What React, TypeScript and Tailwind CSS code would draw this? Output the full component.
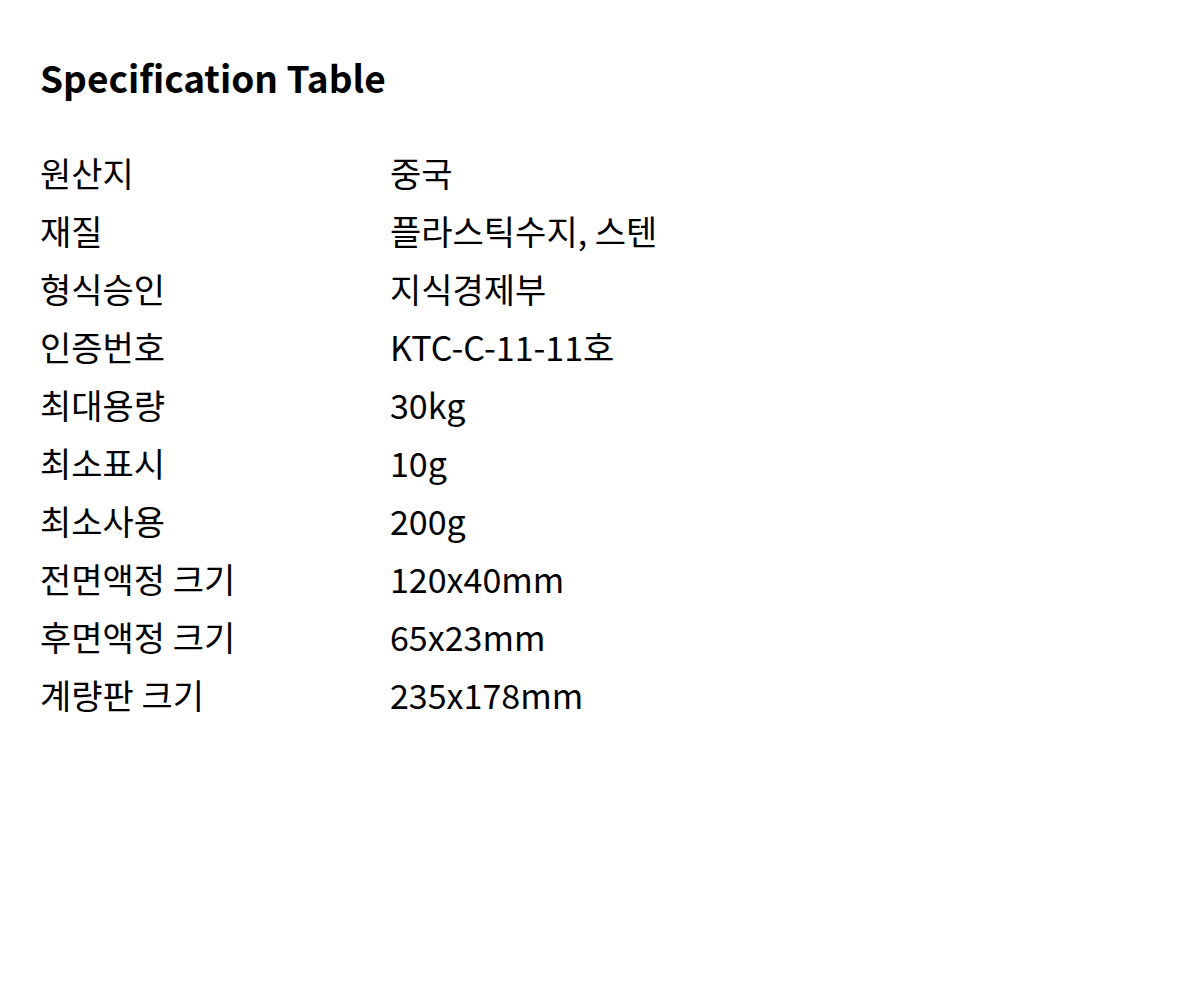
const specs: [string, string][] = [
  ["원산지", "중국"],
  ["재질", "플라스틱수지, 스텐"],
  ["형식승인", "지식경제부"],
  ["인증번호", "KTC-C-11-11호"],
  ["최대용량", "30kg"],
  ["최소표시", "10g"],
  ["최소사용", "200g"],
  ["전면액정 크기", "120x40mm"],
  ["후면액정 크기", "65x23mm"],
  ["계량판 크기", "235x178mm"],
];

const App = () => {
  return (
    <div className="min-h-screen bg-white px-10 pt-[50px] text-black [font-family:'Noto_Sans_CJK_KR','Noto_Sans',sans-serif]">
      <h1 className="text-[37px] font-bold leading-[54px]">Specification Table</h1>
      <table className="mt-[40px] border-collapse">
        <tbody>
          {specs.map(([label, value]) => (
            <tr key={label}>
              <td className="w-[350px] p-0 text-[34px] leading-[58px]">{label}</td>
              <td className="p-0 text-[34px] leading-[58px]">{value}</td>
            </tr>
          ))}
        </tbody>
      </table>
    </div>
  );
};

export default App;
